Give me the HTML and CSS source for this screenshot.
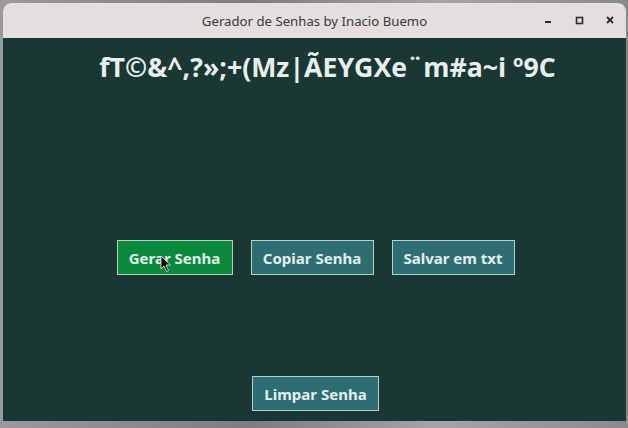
FILE: index.html
```html
<!DOCTYPE html>
<html lang="pt">
<head>
<meta charset="utf-8">
<title>Gerador de Senhas by Inacio Buemo</title>
<link rel="stylesheet" href="styles.css">
</head>
<body>
<div class="window">
  <div class="titlebar">
    <span class="title">Gerador de Senhas by Inacio Buemo</span>
    <div class="controls">
      <svg class="ctl" width="12" height="12" viewBox="0 0 12 12"><rect x="3" y="7" width="6" height="2" fill="#2b2b2b"/></svg>
      <svg class="ctl" width="12" height="12" viewBox="0 0 12 12"><rect x="3.5" y="3.5" width="6" height="6" fill="none" stroke="#2b2b2b" stroke-width="1.6"/></svg>
      <svg class="ctl" width="12" height="12" viewBox="0 0 12 12"><path d="M3 3 L9 9 M9 3 L3 9" stroke="#2b2b2b" stroke-width="1.8"/></svg>
    </div>
  </div>
  <div class="content">
    <div class="password">fT©&amp;^,?»;+(Mz|ÃEYGXe¨m#a~i º9C</div>
    <div class="row">
      <button class="btn btn-green">Gerar Senha
        <svg class="cursor" width="12" height="18" viewBox="0 0 12 18"><path d="M1 1 L1 14 L4 11 L6.5 16.5 L8.5 15.5 L6 10 L10.5 10 Z" fill="#111" stroke="#eee" stroke-width="0.8"/></svg>
      </button>
      <button class="btn btn-teal">Copiar Senha</button>
      <button class="btn btn-teal">Salvar em txt</button>
    </div>
    <div class="row bottom">
      <button class="btn btn-teal wide">Limpar Senha</button>
    </div>
  </div>
</div>
</body>
</html>
```
FILE: styles.css
```css
html, body {
  margin: 0;
  padding: 0;
}
body {
  width: 628px;
  height: 428px;
  background: linear-gradient(90deg, #9a9a9a, #7d7d7d 40%, #a5a5a5 70%, #8a8a8a);
  overflow: hidden;
  font-family: "Noto Sans", "Open Sans", sans-serif;
}
.window {
  margin: 3px 2px 0 3px;
  height: 418px;
  display: flex;
  flex-direction: column;
  background: #1a3833;
  border-radius: 8px 8px 0 0;
  overflow: hidden;
}
.titlebar {
  height: 35px;
  flex: none;
  background: #e3dfdf;
  position: relative;
  display: flex;
  align-items: center;
  justify-content: center;
}
.title {
  font-size: 13.2px;
  color: #3a3a3a;
}
.controls {
  position: absolute;
  right: 10px;
  top: 11px;
  display: flex;
  gap: 19px;
}
.ctl {
  display: block;
}
.content {
  flex: 1;
  display: flex;
  flex-direction: column;
  align-items: center;
  padding-top: 13px;
}
.password {
  font-family: "Open Sans", "Noto Sans", sans-serif;
  font-weight: 700;
  font-size: 26.7px;
  line-height: 32px;
  color: #e6efec;
  white-space: pre;
  padding-left: 26px;
}
.row {
  display: flex;
  gap: 18px;
  margin-top: 157px;
  margin-left: 2px;
}
.row.bottom {
  margin-top: 101px;
}
.btn {
  position: relative;
  height: 35px;
  border: 1px solid #b8cfc9;
  font-family: "Noto Sans", sans-serif;
  font-weight: 700;
  font-size: 15px;
  color: #e2eeea;
  padding: 0;
  width: 123px;
  cursor: default;
}
.btn-green {
  background: #0b8a3c;
  width: 116px;
}
.btn-teal {
  background: #2d6e72;
}
.wide {
  width: 127px;
}
.cursor {
  position: absolute;
  left: 42px;
  top: 14px;
}
```
